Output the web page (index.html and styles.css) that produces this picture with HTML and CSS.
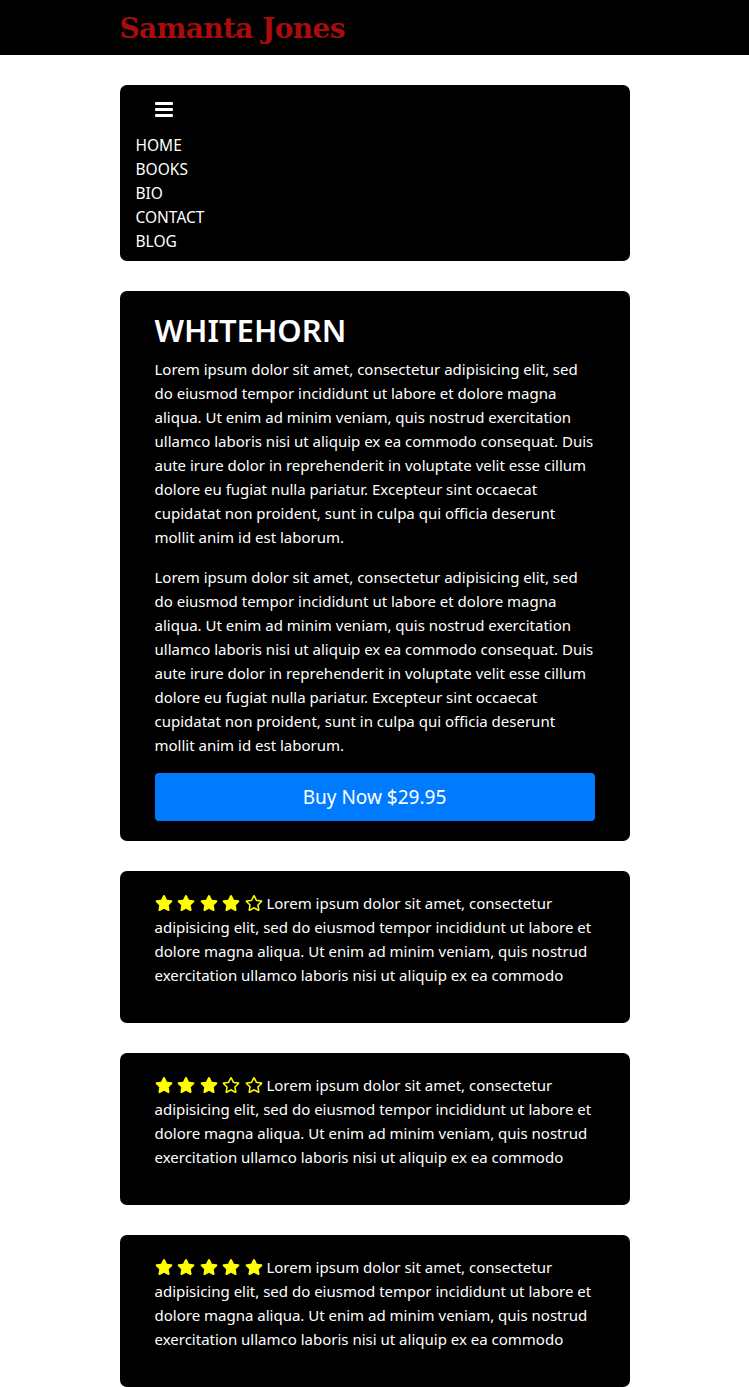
FILE: index.html
```
<!DOCTYPE html>
<html lang="en">
<head>
<meta charset="utf-8">
<title>Samanta Jones</title>
<link rel="stylesheet" href="styles.css">
</head>
<body>
<header class="topbar">
  <div class="wrap"><h1 class="brand">Samanta Jones</h1></div>
</header>
<main class="wrap">
  <nav class="nav card">
    <button class="burger" aria-label="menu">
      <svg width="18" height="16" viewBox="0 0 18 16"><rect x="0" y="1" width="18" height="3" rx="1" fill="#fff"/><rect x="0" y="7" width="18" height="3" rx="1" fill="#fff"/><rect x="0" y="13" width="18" height="3" rx="1" fill="#fff"/></svg>
    </button>
    <ul class="links">
      <li><a href="#">HOME</a></li>
      <li><a href="#">BOOKS</a></li>
      <li><a href="#">BIO</a></li>
      <li><a href="#">CONTACT</a></li>
      <li><a href="#">BLOG</a></li>
    </ul>
  </nav>

  <section class="book card">
    <h2 class="title">WHITEHORN</h2>
    <p>Lorem ipsum dolor sit amet, consectetur adipisicing elit, sed do eiusmod tempor incididunt ut labore et dolore magna aliqua. Ut enim ad minim veniam, quis nostrud exercitation ullamco laboris nisi ut aliquip ex ea commodo consequat. Duis aute irure dolor in reprehenderit in voluptate velit esse cillum dolore eu fugiat nulla pariatur. Excepteur sint occaecat cupidatat non proident, sunt in culpa qui officia deserunt mollit anim id est laborum.</p>
    <p>Lorem ipsum dolor sit amet, consectetur adipisicing elit, sed do eiusmod tempor incididunt ut labore et dolore magna aliqua. Ut enim ad minim veniam, quis nostrud exercitation ullamco laboris nisi ut aliquip ex ea commodo consequat. Duis aute irure dolor in reprehenderit in voluptate velit esse cillum dolore eu fugiat nulla pariatur. Excepteur sint occaecat cupidatat non proident, sunt in culpa qui officia deserunt mollit anim id est laborum.</p>
    <button class="buy">Buy Now $29.95</button>
  </section>

  <section class="review card">
    <p><span class="stars"><svg class="star" viewBox="0 0 576 512"><path class="full" d="M259.3 17.8L194 150.2 47.9 171.5c-26.2 3.8-36.7 36.1-17.7 54.6l105.7 103-25 145.5c-4.5 26.3 23.2 46 46.4 33.7L288 439.6l130.7 68.7c23.2 12.2 50.9-7.4 46.4-33.7l-25-145.5 105.7-103c19-18.5 8.5-50.8-17.7-54.6L382 150.2 316.7 17.8c-11.7-23.6-45.6-23.9-57.4 0z"/></svg><svg class="star" viewBox="0 0 576 512"><path class="full" d="M259.3 17.8L194 150.2 47.9 171.5c-26.2 3.8-36.7 36.1-17.7 54.6l105.7 103-25 145.5c-4.5 26.3 23.2 46 46.4 33.7L288 439.6l130.7 68.7c23.2 12.2 50.9-7.4 46.4-33.7l-25-145.5 105.7-103c19-18.5 8.5-50.8-17.7-54.6L382 150.2 316.7 17.8c-11.7-23.6-45.6-23.9-57.4 0z"/></svg><svg class="star" viewBox="0 0 576 512"><path class="full" d="M259.3 17.8L194 150.2 47.9 171.5c-26.2 3.8-36.7 36.1-17.7 54.6l105.7 103-25 145.5c-4.5 26.3 23.2 46 46.4 33.7L288 439.6l130.7 68.7c23.2 12.2 50.9-7.4 46.4-33.7l-25-145.5 105.7-103c19-18.5 8.5-50.8-17.7-54.6L382 150.2 316.7 17.8c-11.7-23.6-45.6-23.9-57.4 0z"/></svg><svg class="star" viewBox="0 0 576 512"><path class="full" d="M259.3 17.8L194 150.2 47.9 171.5c-26.2 3.8-36.7 36.1-17.7 54.6l105.7 103-25 145.5c-4.5 26.3 23.2 46 46.4 33.7L288 439.6l130.7 68.7c23.2 12.2 50.9-7.4 46.4-33.7l-25-145.5 105.7-103c19-18.5 8.5-50.8-17.7-54.6L382 150.2 316.7 17.8c-11.7-23.6-45.6-23.9-57.4 0z"/></svg><svg class="star" viewBox="0 0 576 512"><path class="full" d="M528.1 171.5L382 150.2 316.7 17.8c-11.7-23.6-45.6-23.9-57.4 0L194 150.2 47.9 171.5c-26.2 3.8-36.7 36.1-17.7 54.6l105.7 103-25 145.5c-4.5 26.3 23.2 46 46.4 33.7L288 439.6l130.7 68.7c23.2 12.2 50.9-7.4 46.4-33.7l-25-145.5 105.7-103c19-18.5 8.5-50.8-17.7-54.6zM388.6 312.3l23.7 138.4L288 385.4l-124.3 65.3 23.7-138.4-100.6-98 139-20.2 62.2-126 62.2 126 139 20.2-100.6 98z"/></svg></span> Lorem ipsum dolor sit amet, consectetur adipisicing elit, sed do eiusmod tempor incididunt ut labore et dolore magna aliqua. Ut enim ad minim veniam, quis nostrud exercitation ullamco laboris nisi ut aliquip ex ea commodo</p>
  </section>

  <section class="review card">
    <p><span class="stars"><svg class="star" viewBox="0 0 576 512"><path class="full" d="M259.3 17.8L194 150.2 47.9 171.5c-26.2 3.8-36.7 36.1-17.7 54.6l105.7 103-25 145.5c-4.5 26.3 23.2 46 46.4 33.7L288 439.6l130.7 68.7c23.2 12.2 50.9-7.4 46.4-33.7l-25-145.5 105.7-103c19-18.5 8.5-50.8-17.7-54.6L382 150.2 316.7 17.8c-11.7-23.6-45.6-23.9-57.4 0z"/></svg><svg class="star" viewBox="0 0 576 512"><path class="full" d="M259.3 17.8L194 150.2 47.9 171.5c-26.2 3.8-36.7 36.1-17.7 54.6l105.7 103-25 145.5c-4.5 26.3 23.2 46 46.4 33.7L288 439.6l130.7 68.7c23.2 12.2 50.9-7.4 46.4-33.7l-25-145.5 105.7-103c19-18.5 8.5-50.8-17.7-54.6L382 150.2 316.7 17.8c-11.7-23.6-45.6-23.9-57.4 0z"/></svg><svg class="star" viewBox="0 0 576 512"><path class="full" d="M259.3 17.8L194 150.2 47.9 171.5c-26.2 3.8-36.7 36.1-17.7 54.6l105.7 103-25 145.5c-4.5 26.3 23.2 46 46.4 33.7L288 439.6l130.7 68.7c23.2 12.2 50.9-7.4 46.4-33.7l-25-145.5 105.7-103c19-18.5 8.5-50.8-17.7-54.6L382 150.2 316.7 17.8c-11.7-23.6-45.6-23.9-57.4 0z"/></svg><svg class="star" viewBox="0 0 576 512"><path class="full" d="M528.1 171.5L382 150.2 316.7 17.8c-11.7-23.6-45.6-23.9-57.4 0L194 150.2 47.9 171.5c-26.2 3.8-36.7 36.1-17.7 54.6l105.7 103-25 145.5c-4.5 26.3 23.2 46 46.4 33.7L288 439.6l130.7 68.7c23.2 12.2 50.9-7.4 46.4-33.7l-25-145.5 105.7-103c19-18.5 8.5-50.8-17.7-54.6zM388.6 312.3l23.7 138.4L288 385.4l-124.3 65.3 23.7-138.4-100.6-98 139-20.2 62.2-126 62.2 126 139 20.2-100.6 98z"/></svg><svg class="star" viewBox="0 0 576 512"><path class="full" d="M528.1 171.5L382 150.2 316.7 17.8c-11.7-23.6-45.6-23.9-57.4 0L194 150.2 47.9 171.5c-26.2 3.8-36.7 36.1-17.7 54.6l105.7 103-25 145.5c-4.5 26.3 23.2 46 46.4 33.7L288 439.6l130.7 68.7c23.2 12.2 50.9-7.4 46.4-33.7l-25-145.5 105.7-103c19-18.5 8.5-50.8-17.7-54.6zM388.6 312.3l23.7 138.4L288 385.4l-124.3 65.3 23.7-138.4-100.6-98 139-20.2 62.2-126 62.2 126 139 20.2-100.6 98z"/></svg></span> Lorem ipsum dolor sit amet, consectetur adipisicing elit, sed do eiusmod tempor incididunt ut labore et dolore magna aliqua. Ut enim ad minim veniam, quis nostrud exercitation ullamco laboris nisi ut aliquip ex ea commodo</p>
  </section>

  <section class="review card">
    <p><span class="stars"><svg class="star" viewBox="0 0 576 512"><path class="full" d="M259.3 17.8L194 150.2 47.9 171.5c-26.2 3.8-36.7 36.1-17.7 54.6l105.7 103-25 145.5c-4.5 26.3 23.2 46 46.4 33.7L288 439.6l130.7 68.7c23.2 12.2 50.9-7.4 46.4-33.7l-25-145.5 105.7-103c19-18.5 8.5-50.8-17.7-54.6L382 150.2 316.7 17.8c-11.7-23.6-45.6-23.9-57.4 0z"/></svg><svg class="star" viewBox="0 0 576 512"><path class="full" d="M259.3 17.8L194 150.2 47.9 171.5c-26.2 3.8-36.7 36.1-17.7 54.6l105.7 103-25 145.5c-4.5 26.3 23.2 46 46.4 33.7L288 439.6l130.7 68.7c23.2 12.2 50.9-7.4 46.4-33.7l-25-145.5 105.7-103c19-18.5 8.5-50.8-17.7-54.6L382 150.2 316.7 17.8c-11.7-23.6-45.6-23.9-57.4 0z"/></svg><svg class="star" viewBox="0 0 576 512"><path class="full" d="M259.3 17.8L194 150.2 47.9 171.5c-26.2 3.8-36.7 36.1-17.7 54.6l105.7 103-25 145.5c-4.5 26.3 23.2 46 46.4 33.7L288 439.6l130.7 68.7c23.2 12.2 50.9-7.4 46.4-33.7l-25-145.5 105.7-103c19-18.5 8.5-50.8-17.7-54.6L382 150.2 316.7 17.8c-11.7-23.6-45.6-23.9-57.4 0z"/></svg><svg class="star" viewBox="0 0 576 512"><path class="full" d="M259.3 17.8L194 150.2 47.9 171.5c-26.2 3.8-36.7 36.1-17.7 54.6l105.7 103-25 145.5c-4.5 26.3 23.2 46 46.4 33.7L288 439.6l130.7 68.7c23.2 12.2 50.9-7.4 46.4-33.7l-25-145.5 105.7-103c19-18.5 8.5-50.8-17.7-54.6L382 150.2 316.7 17.8c-11.7-23.6-45.6-23.9-57.4 0z"/></svg><svg class="star" viewBox="0 0 576 512"><path class="full" d="M259.3 17.8L194 150.2 47.9 171.5c-26.2 3.8-36.7 36.1-17.7 54.6l105.7 103-25 145.5c-4.5 26.3 23.2 46 46.4 33.7L288 439.6l130.7 68.7c23.2 12.2 50.9-7.4 46.4-33.7l-25-145.5 105.7-103c19-18.5 8.5-50.8-17.7-54.6L382 150.2 316.7 17.8c-11.7-23.6-45.6-23.9-57.4 0z"/></svg></span> Lorem ipsum dolor sit amet, consectetur adipisicing elit, sed do eiusmod tempor incididunt ut labore et dolore magna aliqua. Ut enim ad minim veniam, quis nostrud exercitation ullamco laboris nisi ut aliquip ex ea commodo</p>
  </section>
</main>
</body>
</html>
```

FILE: styles.css
```
* { box-sizing: border-box; }
html, body { margin: 0; padding: 0; background: #fff; }
body {
  font-family: "Noto Sans", "Open Sans", sans-serif;
  font-size: 15px;
  line-height: 24px;
  color: #fff;
}
.wrap { width: 510px; margin: 0 auto; }
.topbar { background: #000; height: 55px; padding-top: 3px; }
.brand {
  margin: 0;
  font-family: "DejaVu Serif", "Liberation Serif", serif;
  font-weight: bold;
  font-size: 28px;
  line-height: 52px;
  color: #a80c0c;
  letter-spacing: -0.6px;
}
main.wrap { display: flex; flex-direction: column; gap: 30px; padding: 30px 0 0; }
.card { background: #000; border-radius: 7px; }
.nav { padding: 15px 16px 8px; }
.burger {
  display: block;
  background: none;
  border: 0;
  padding: 0;
  margin: 0 0 0 19px;
  height: 18px;
  cursor: pointer;
}
.burger svg { display: block; }
.links { list-style: none; margin: 15px 0 0; padding: 0; font-size: 15.5px; }
.links a { color: #fff; text-decoration: none; }
.book { padding: 15px 35px 20px; }
.title {
  margin: 0 0 3px;
  font-size: 31px;
  line-height: 48px;
  font-weight: 600;
}
.book p { margin: 0 0 16px; }
.buy {
  display: block;
  width: 100%;
  height: 48px;
  border: 0;
  border-radius: 4px;
  background: #007bff;
  color: #fff;
  font-family: inherit;
  font-size: 19px;
  cursor: pointer;
}
.review { padding: 20px 35px 35px; height: 152px; }
.review p { margin: 0; }
.stars { display: inline-flex; gap: 4.5px; vertical-align: -2px; }
.star { width: 18px; height: 16px; display: block; }
.full { fill: #ffff00; }
```
